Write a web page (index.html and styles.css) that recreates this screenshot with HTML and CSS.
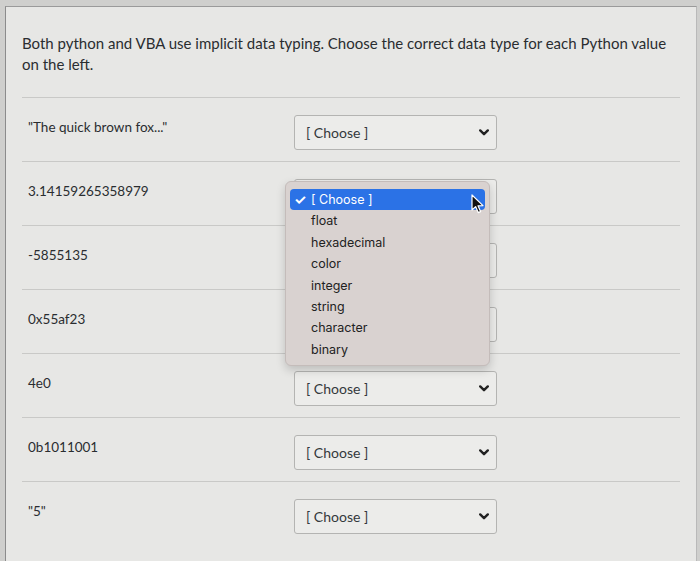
FILE: index.html
```html
<!DOCTYPE html>
<html lang="en">
<head>
    <meta charset="UTF-8">
    <meta name="viewport" content="width=device-width, initial-scale=1.0">
    <title>Matching Question</title>
    <link rel="stylesheet" href="styles.css">
</head>
<body>
    <div class="frame">
        <div class="prompt">
            Both python and VBA use implicit data typing. Choose the correct data type for each Python value on the left.
        </div>

        <div class="answers">
            <div class="row">
                <div class="label">"The quick brown fox..."</div>
                <div class="select-wrap">
                    <div class="select"><span>[ Choose ]</span><svg class="chev" width="10" height="7" viewBox="0 0 10 7"><polyline points="1.2,1.4 5,5.2 8.8,1.4"/></svg></div>
                </div>
            </div>

            <div class="row">
                <div class="label">3.14159265358979</div>
                <div class="select-wrap">
                    <div class="select covered"><span>[ Choose ]</span><svg class="chev" width="10" height="7" viewBox="0 0 10 7"><polyline points="1.2,1.4 5,5.2 8.8,1.4"/></svg></div>

                    <div class="menu">
                        <div class="menu-item active"><span class="tick">✓</span>[ Choose ]</div>
                        <div class="menu-item">float</div>
                        <div class="menu-item">hexadecimal</div>
                        <div class="menu-item">color</div>
                        <div class="menu-item">integer</div>
                        <div class="menu-item">string</div>
                        <div class="menu-item">character</div>
                        <div class="menu-item">binary</div>
                        <svg class="pointer" width="14" height="20" viewBox="0 0 14 20">
                            <path d="M1 1 L1 16 L4.6 12.6 L7.2 18.6 L9.6 17.6 L7 11.8 L12 11.6 Z"/>
                        </svg>
                    </div>
                </div>
            </div>

            <div class="row">
                <div class="label">-5855135</div>
                <div class="select-wrap">
                    <div class="select covered"><span>[ Choose ]</span><svg class="chev" width="10" height="7" viewBox="0 0 10 7"><polyline points="1.2,1.4 5,5.2 8.8,1.4"/></svg></div>
                </div>
            </div>

            <div class="row">
                <div class="label">0x55af23</div>
                <div class="select-wrap">
                    <div class="select covered"><span>[ Choose ]</span><svg class="chev" width="10" height="7" viewBox="0 0 10 7"><polyline points="1.2,1.4 5,5.2 8.8,1.4"/></svg></div>
                </div>
            </div>

            <div class="row">
                <div class="label">4e0</div>
                <div class="select-wrap">
                    <div class="select"><span>[ Choose ]</span><svg class="chev" width="10" height="7" viewBox="0 0 10 7"><polyline points="1.2,1.4 5,5.2 8.8,1.4"/></svg></div>
                </div>
            </div>

            <div class="row">
                <div class="label">0b1011001</div>
                <div class="select-wrap">
                    <div class="select"><span>[ Choose ]</span><svg class="chev" width="10" height="7" viewBox="0 0 10 7"><polyline points="1.2,1.4 5,5.2 8.8,1.4"/></svg></div>
                </div>
            </div>

            <div class="row">
                <div class="label">"5"</div>
                <div class="select-wrap">
                    <div class="select"><span>[ Choose ]</span><svg class="chev" width="10" height="7" viewBox="0 0 10 7"><polyline points="1.2,1.4 5,5.2 8.8,1.4"/></svg></div>
                </div>
            </div>
        </div>
    </div>
</body>
</html>
```

FILE: styles.css
```css
html, body {
    height: 100%;
}

body {
    margin: 0;
    font-family: Lato, 'Open Sans', sans-serif;
    background: #cfcfcd;
    color: #2a2d30;
    overflow: hidden;
}

.frame {
    box-sizing: border-box;
    height: calc(100% - 6px);
    margin: 6px 3px 0 5px;
    padding: 0 16px;
    background: #e7e7e5;
    border-left: 1px solid #8c8c8c;
    border-top: 1px solid #9a9a9a;
    border-right: 1px solid #b9b9b9;
}

.prompt {
    font-size: 15px;
    line-height: 21px;
    padding-top: 26px;
    height: 64px;
    padding-right: 10px;
}

.row {
    display: flex;
    align-items: center;
    height: 63px;
    padding-left: 6px;
    border-top: 1px solid #c9c9c7;
}

.label {
    width: 266px;
    font-size: 13.5px;
    margin-top: -5px;
}

.select-wrap {
    position: relative;
}

.select {
    box-sizing: border-box;
    width: 203px;
    height: 35px;
    padding: 0 7px 0 11px;
    display: flex;
    align-items: center;
    justify-content: space-between;
    background: #ececea;
    border: 1px solid #b4b4b2;
    border-radius: 3px;
    font-size: 14px;
    color: #34383c;
    margin-top: 6px;
}

/* value hidden behind the open menu */
.select.covered span {
    visibility: hidden;
}

.chev polyline {
    fill: none;
    stroke: #222;
    stroke-width: 2.4;
    stroke-linecap: round;
    stroke-linejoin: round;
}

.menu {
    position: absolute;
    z-index: 10;
    top: 8px;
    left: -9px;
    width: 205px;
    box-sizing: border-box;
    padding: 7px 4px 5px;
    background: #d9d2d0;
    border: 1px solid #c4bcba;
    border-radius: 6px;
    box-shadow: 0 4px 10px rgba(0,0,0,0.18);
    font-family: Inter, 'Open Sans', sans-serif;
    font-size: 12.5px;
    color: #222;
}

.menu-item {
    height: 21.4px;
    line-height: 21.4px;
    padding-left: 21px;
    border-radius: 4px;
}

.menu-item.active {
    position: relative;
    background: #2b72e6;
    color: white;
}

.tick {
    position: absolute;
    left: 4px;
    font-size: 14px;
    font-weight: 700;
}

.pointer {
    position: absolute;
    top: 12px;
    left: 185px;
}

.pointer path {
    fill: #111;
    stroke: white;
    stroke-width: 1.2;
    stroke-linejoin: round;
}
```
